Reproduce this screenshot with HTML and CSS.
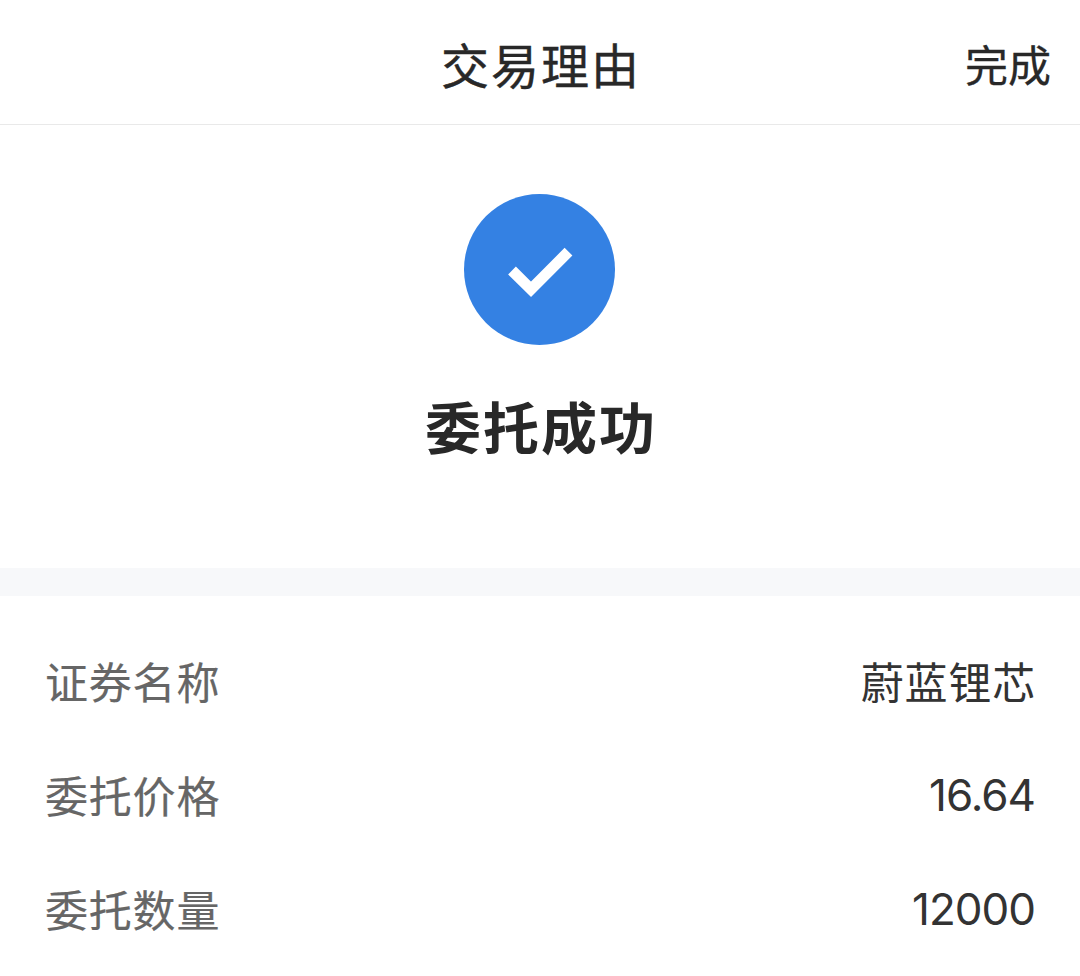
FILE: index.html
```
<!DOCTYPE html>
<html lang="zh-CN">
<head>
<meta charset="UTF-8">
<meta name="viewport" content="width=device-width, initial-scale=1.0">
<title>交易理由</title>
<link rel="stylesheet" href="styles.css">
</head>
<body>
  <header class="header">
    <h1 class="header-title">交易理由</h1>
    <a class="header-done">完成</a>
  </header>

  <section class="result">
    <!-- success icon -->
    <svg class="result-icon" viewBox="0 0 152 152">
      <circle cx="75.5" cy="76.5" r="75.5" fill="#3481e3"/>
      <path d="M48 77.5 L67 96.3 L104.5 58.7" fill="none" stroke="#fff" stroke-width="11"/>
    </svg>
    <h2 class="result-text">委托成功</h2>
  </section>

  <div class="divider"></div>

  <ul class="details">
    <li class="row">
      <span class="label">证券名称</span>
      <span class="value">蔚蓝锂芯</span>
    </li>
    <li class="row">
      <span class="label">委托价格</span>
      <span class="value number">16.64</span>
    </li>
    <li class="row">
      <span class="label">委托数量</span>
      <span class="value number">12000</span>
    </li>
  </ul>
</body>
</html>
```
FILE: styles.css
```
* {
  box-sizing: border-box;
}
body {
  margin: 0;
  background-color: #fff;
  color: #282828;
  font-family: "Noto Sans CJK SC", sans-serif;
}
.header {
  display: grid;
  grid-template-columns: 1fr auto 1fr;
  align-items: center;
  height: 125px;
  padding: 1px 29px 0;
  border-bottom: 1px solid #e9e9e9;
}
.header-title {
  grid-column: 2;
  margin: 0;
  padding-left: 2px; /* balances the trailing letter spacing */
  font-size: 48px;
  font-weight: 400;
  line-height: 60px;
  letter-spacing: 2px;
  -webkit-text-stroke: 0.4px;
}
.header-done {
  justify-self: end;
  font-size: 43px;
  line-height: 60px;
  -webkit-text-stroke: 0.3px;
}
.result {
  display: flex;
  flex-direction: column;
  align-items: center;
  height: 443px;
  padding-top: 68px;
}
.result-icon {
  width: 152px;
  height: 152px;
}
.result-text {
  margin: 40px 0 0;
  padding-left: 2px;
  font-size: 56px;
  font-weight: 700;
  line-height: 80px;
  letter-spacing: 2px;
}
.divider {
  height: 28px;
  background-color: #f7f8fa;
}
.details {
  margin: 0;
  padding: 27px 44px 0 45px;
  list-style: none;
}
.row {
  display: flex;
  align-items: center;
  justify-content: space-between;
  height: 114px;
  font-size: 43px;
  line-height: 60px;
}
.label {
  color: #666;
  letter-spacing: 0.8px;
  -webkit-text-stroke: 0.2px;
}
.value {
  color: #333;
  letter-spacing: 0.8px;
}
.number {
  padding: 2px 1px 0 0;
  font-family: Inter, sans-serif;
  font-size: 44px;
  letter-spacing: -1px;
}
```
